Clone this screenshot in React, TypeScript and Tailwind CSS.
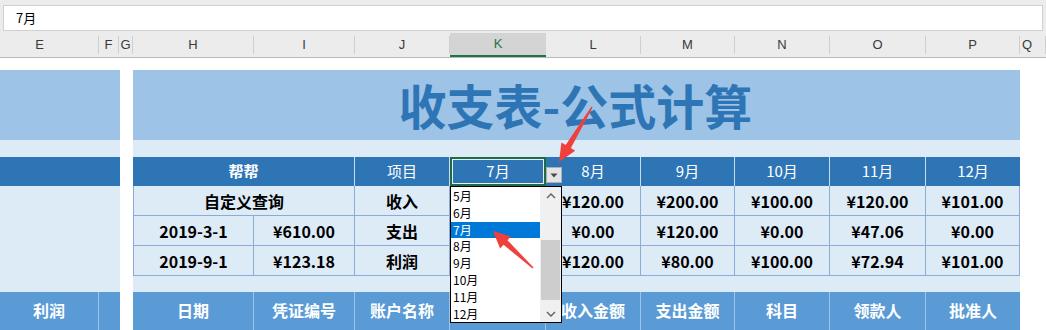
import React from "react";

const cjk = { fontFamily: '"Noto Sans CJK SC", "Noto Sans", sans-serif' };
const arial = { fontFamily: '"Liberation Sans", Arial, sans-serif' };

const sheetCols = [
  { key: "E", w: 99, cls: "pr-[19px]" },
  { key: "F", w: 20, cls: "" },
  { key: "G", w: 14, cls: "" },
  { key: "H", w: 121, cls: "" },
  { key: "I", w: 101, cls: "" },
  { key: "J", w: 95, cls: "" },
  { key: "K", w: 96, cls: "" },
  { key: "L", w: 95, cls: "" },
  { key: "M", w: 94, cls: "" },
  { key: "N", w: 95, cls: "" },
  { key: "O", w: 96, cls: "" },
  { key: "P", w: 94, cls: "" },
  { key: "Q", w: 26, cls: "justify-start pl-[2px]" },
];

const monthCols = [
  { label: "8月", w: 95 },
  { label: "9月", w: 94 },
  { label: "10月", w: 95 },
  { label: "11月", w: 96 },
  { label: "12月", w: 94 },
];

const dataRows = [
  { left: null, label: "收入", vals: ["¥120.00", "¥200.00", "¥100.00", "¥120.00", "¥101.00"] },
  { left: ["2019-3-1", "¥610.00"], label: "支出", vals: ["¥0.00", "¥120.00", "¥0.00", "¥47.06", "¥0.00"] },
  { left: ["2019-9-1", "¥123.18"], label: "利润", vals: ["¥120.00", "¥80.00", "¥100.00", "¥72.94", "¥101.00"] },
];

const bottomHeads = [
  { label: "日期", w: 121 },
  { label: "凭证编号", w: 101 },
  { label: "账户名称", w: 95 },
  { label: "", w: 96 },
  { label: "收入金额", w: 95 },
  { label: "支出金额", w: 94 },
  { label: "科目", w: 95 },
  { label: "领款人", w: 96 },
  { label: "批准人", w: 94 },
];

const months = ["5月", "6月", "7月", "8月", "9月", "10月", "11月", "12月"];

function Cell({ w, className = "", children }: { w: number; className?: string; children?: React.ReactNode }) {
  return (
    <div
      className={`flex shrink-0 items-center justify-center box-border ${className}`}
      style={{ width: w }}
    >
      {children}
    </div>
  );
}

function Dropdown() {
  return (
    <div
      className="absolute left-[317px] top-[116px] h-[137px] w-[112px] border border-black bg-white flex"
      style={cjk}
    >
      <div className="flex-1 pt-[1px]">
        {months.map((m) => (
          <div
            key={m}
            className={`h-[16.8px] pl-[2px] text-[12px] leading-[16.8px] ${
              m === "7月" ? "bg-[#0078d7] text-white" : "text-black"
            }`}
          >
            {m}
          </div>
        ))}
      </div>
      <div className="flex w-[21px] flex-col bg-[#f0f0f0]">
        <div className="flex h-[17px] items-center justify-center">
          <svg width="10" height="6" viewBox="0 0 10 6">
            <path d="M1 5 L5 1 L9 5" fill="none" stroke="#606060" strokeWidth="1.4" />
          </svg>
        </div>
        <div className="h-[36px]" />
        <div className="mx-[1px] h-[60px] bg-[#cdcdcd]" />
        <div className="flex-1" />
        <div className="flex h-[17px] items-center justify-center">
          <svg width="10" height="6" viewBox="0 0 10 6">
            <path d="M1 1 L5 5 L9 1" fill="none" stroke="#606060" strokeWidth="1.4" />
          </svg>
        </div>
      </div>
    </div>
  );
}

function Arrows() {
  return (
    <svg className="pointer-events-none absolute left-0 top-0" width="1046" height="330">
      <polygon
        points="591.4,106.6 565.7,145.1 561.4,142.5 559,162 575.2,150.7 570.9,148.1 592.6,107.4"
        fill="#f0403c"
      />
      <polygon
        points="533.5,267.5 507.5,240.3 510.9,236.6 493,231 500.1,248.4 503.5,244.7 532.5,268.5"
        fill="#f0403c"
      />
    </svg>
  );
}

export default function App() {
  return (
    <div className="relative h-[330px] w-[1046px] overflow-hidden bg-white" style={cjk}>
      {/* formula bar */}
      <div className="h-[33px] bg-[#ececec] px-[3px] pt-[5px]">
        <div className="flex h-[26px] items-center border border-[#d0d0d0] bg-white pl-[12px] text-[13px] text-black">
          7月
        </div>
      </div>

      {/* column letters */}
      <div className="flex h-[25px] border-b border-[#b8b8b8] bg-[#ececec] text-[13px] text-[#3a3a3a]" style={arial}>
        {sheetCols.map((c) => (
          <Cell
            key={c.key}
            w={c.w}
            className={`${c.cls} ${
              c.key === "K"
                ? "bg-[#d4d4d4] border-b-2 border-[#217346] text-[#217346]"
                : "border-r border-[#cfcfcf] my-[3px]"
            }`}
          >
            {c.key}
          </Cell>
        ))}
      </div>

      <div className="h-[12px]" />

      {/* sheet body */}
      <div className="flex">
        {/* left block */}
        <div className="flex w-[120px] shrink-0 flex-col">
          <div className="h-[70px] bg-[#9dc3e6]" />
          <div className="h-[17px] bg-[#ddebf7]" />
          <div className="h-[29px] bg-[#2e75b6]" />
          <div className="h-[106px] bg-[#ddebf7]" />
          <div className="flex h-[38px] bg-[#5b9bd5] text-[16px] font-bold text-white">
            <Cell w={99} className="border-r border-[#9dc3e6] pb-[3px]">利润</Cell>
            <Cell w={21} />
          </div>
        </div>

        <div className="w-[13px] shrink-0" />

        {/* right block */}
        <div className="relative flex w-[887px] shrink-0 flex-col">
          <div className="flex h-[70px] items-center justify-center bg-[#9dc3e6] pr-[2px] pb-[2px]">
            <span className="text-[48px] font-bold leading-none text-[#2e75b6]">收支表-公式计算</span>
          </div>
          <div className="h-[17px] bg-[#ddebf7]" />

          {/* month header */}
          <div className="flex h-[29px] bg-[#2e75b6] text-[15px] text-white">
            <Cell w={222} className="border-r border-[#c9dcef] font-bold">帮帮</Cell>
            <Cell w={95} className="border-r border-[#c9dcef]">项目</Cell>
            <Cell w={96} className="relative border-2 border-[#1f6b43]">
              <div className="absolute inset-0 border border-[#e6eef6]" />
              7月
            </Cell>
            {monthCols.map((m, i) => (
              <Cell key={m.label} w={m.w} className={i < monthCols.length - 1 ? "border-r border-[#c9dcef]" : ""}>
                {m.label}
              </Cell>
            ))}
          </div>

          {/* data rows */}
          <div className="border-l border-[#8eaadb] bg-[#ddebf7] text-[16px] font-bold text-black">
            {dataRows.map((r, ri) => (
              <div key={ri} className="flex h-[30px] border-b border-[#8eaadb]">
                {r.left ? (
                  <>
                    <Cell w={120} className="border-r border-[#8eaadb]">{r.left[0]}</Cell>
                    <Cell w={101} className="border-r border-[#8eaadb]">{r.left[1]}</Cell>
                  </>
                ) : (
                  <Cell w={221} className="border-r border-[#8eaadb]">自定义查询</Cell>
                )}
                <Cell w={95} className="border-r border-[#8eaadb]">{r.label}</Cell>
                <Cell w={96} className="border-r border-[#8eaadb]" />
                {r.vals.map((v, i) => (
                  <Cell key={i} w={monthCols[i].w} className="border-r border-[#8eaadb]">
                    {v}
                  </Cell>
                ))}
              </div>
            ))}
          </div>

          <div className="h-[16px] bg-[#ddebf7]" />

          {/* bottom header */}
          <div className="flex h-[38px] bg-[#5b9bd5] text-[16px] font-bold text-white">
            {bottomHeads.map((h, i) => (
              <Cell
                key={i}
                w={h.w}
                className={`pb-[3px] ${i < bottomHeads.length - 1 ? "border-r border-[#9dc3e6]" : ""}`}
              >
                {h.label}
              </Cell>
            ))}
          </div>

          {/* validation dropdown button */}
          <div className="absolute left-[413px] top-[97px] flex h-[16px] w-[16px] items-center justify-center border border-[#b0b0b0] bg-[#e4e4e4]">
            <svg width="8" height="5" viewBox="0 0 8 5">
              <path d="M0.5 0.5 L7.5 0.5 L4 4.5 Z" fill="#4a4a4a" />
            </svg>
          </div>

          <Dropdown />
        </div>
      </div>

      <Arrows />
    </div>
  );
}
